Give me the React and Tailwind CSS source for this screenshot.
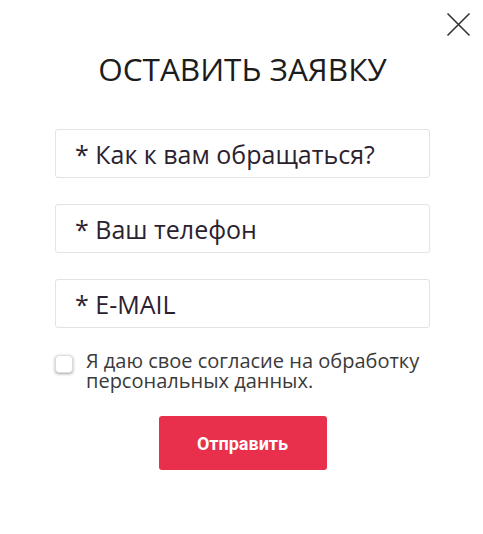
import { useState } from "react";

export default function App() {
  const [agree, setAgree] = useState(false);

  return (
    <div className="w-[483px] h-[534px] bg-white relative font-['Open_Sans',sans-serif] text-[#222]">
      {/* close */}
      <button className="absolute right-[12px] top-[12px] w-[25px] h-[25px] flex items-center justify-center">
        <svg width="25" height="25" viewBox="0 0 25 25" fill="none" stroke="#333" strokeWidth="1.6">
          <path d="M1.5 1.5 L23.5 23.5 M23.5 1.5 L1.5 23.5" />
        </svg>
      </button>

      <div className="flex flex-col items-center pt-[48px] pl-[2px]">
        <h2 className="text-[31.5px] leading-[42px] font-normal text-[#1c1c1c]">
          ОСТАВИТЬ ЗАЯВКУ
        </h2>

        <form className="mt-[39px] w-[375px] flex flex-col gap-[26px]">
          <Field placeholder="* Как к вам обращаться?" />
          <Field placeholder="* Ваш телефон" />
          <Field placeholder="* E-MAIL" />
        </form>

        <label className="mt-[23px] w-[375px] flex items-start gap-[13px] cursor-pointer">
          <span
            onClick={() => setAgree(!agree)}
            className="mt-[4px] w-[18px] h-[18px] shrink-0 rounded-[4px] border border-[#ddd] bg-white shadow-[0_1px_3px_rgba(0,0,0,0.35)]"
          />
          <span className="text-[20px] leading-[20px] text-[#3a3a3a]">
            Я даю свое согласие на обработку персональных данных.
          </span>
        </label>

        <button className="mt-[25px] w-[168px] h-[54px] rounded-[3px] bg-[#e8304c] text-white font-['Roboto',sans-serif] font-bold text-[18px]">
          Отправить
        </button>
      </div>
    </div>
  );
}

function Field({ placeholder }) {
  return (
    <input
      placeholder={placeholder}
      className="h-[49px] w-full rounded-[3px] border border-[#e3e3e3] bg-white px-[19px] text-[25px] text-[#2b2230] placeholder:text-[#2b2230] outline-none"
    />
  );
}
